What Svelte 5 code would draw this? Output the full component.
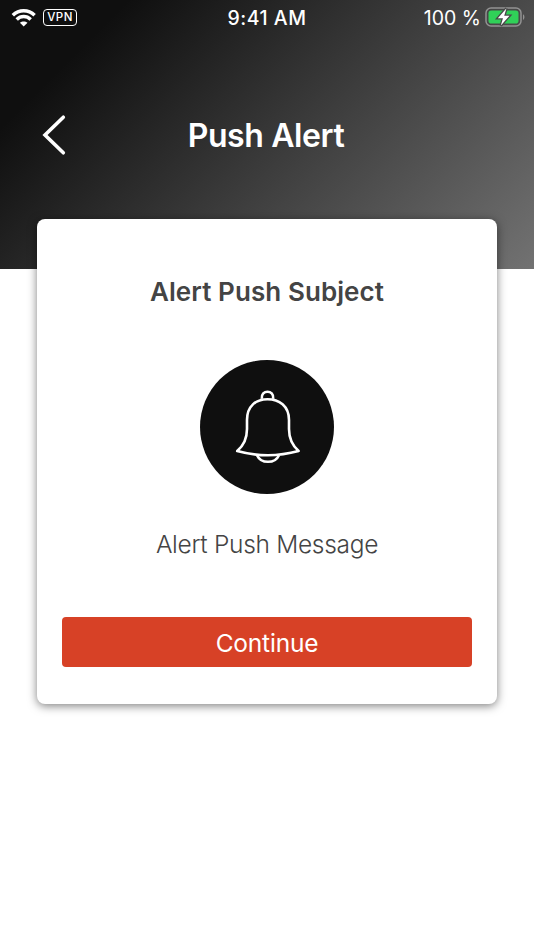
<script>
  const time = '9:41 AM';
  const battery = '100 %';
</script>

<main class="screen">
  <header class="hero">
    <div class="status">
      <div class="side left">
        <svg class="wifi" width="26" height="20" viewBox="0 0 26 20" fill="none" stroke="#fff" stroke-width="3.5">
          <path d="M1.8 7.2C8 1.2 17.4 1.2 23.6 7.2" />
          <path d="M5.7 11.5C9.8 7.6 15.6 7.6 19.7 11.5" />
          <path d="M12.7 18.6L8.9 14.8C11.1 12.9 14.3 12.9 16.5 14.8Z" fill="#fff" stroke="none" />
        </svg>
        <span class="vpn">VPN</span>
      </div>
      <div class="time">{time}</div>
      <div class="side right">
        <span class="percent">{battery}</span>
        <svg class="battery" width="40" height="22" viewBox="0 0 40 22">
          <rect x="1" y="2" width="35" height="18" rx="5" fill="none" stroke="#929292" stroke-width="1.5" />
          <rect x="3.5" y="4.4" width="30" height="13.2" rx="2.8" fill="#30d158" />
          <path d="M38 8.2C39.9 9 39.9 13 38 13.8Z" fill="#929292" />
          <path d="M21.5 2.3L12.8 12.2H18L15.8 19.6L24.5 9.7H19.2Z" fill="#fff" stroke="#484848" stroke-width="2.6" paint-order="stroke" />
        </svg>
      </div>
    </div>
    <div class="nav">
      <button class="back" aria-label="Back">
        <svg width="26" height="42" viewBox="0 0 26 42" fill="none" stroke="#fff" stroke-width="3.6" stroke-linecap="round" stroke-linejoin="miter">
          <path d="M23.3 3.2L5 21L23.3 38.8" />
        </svg>
      </button>
      <h1>Push Alert</h1>
    </div>
  </header>

  <section class="card">
    <h2>Alert Push Subject</h2>
    <div class="disc">
      <svg width="134" height="134" viewBox="0 0 134 134" fill="none" stroke="#fff" stroke-width="2.6" stroke-linejoin="round">
        <path d="M61.8 38.8C60.7 29.3 74.3 29.3 73.2 38.8" />
        <path d="M47 60C47 46 56 39.2 67.5 39.2S89 46 89 60V69C89 78.5 93.5 86.5 98.6 91C78 96.6 57.5 96.6 37.2 91C42.5 86.5 47 78.5 47 69Z" />
        <path d="M57 95.2C61 104 75 104 79 95.2" />
      </svg>
    </div>
    <p>Alert Push Message</p>
    <button class="continue">Continue</button>
  </section>
</main>

<style>
  .screen {
    width: 534px;
    height: 950px;
    overflow: hidden;
    background: #fff;
    font-family: Inter, "Liberation Sans", sans-serif;
  }
  .hero {
    height: 269px;
    background: linear-gradient(135deg, #0f0f0f 16%, #727272 100%);
    color: #fff;
  }
  .status {
    height: 34px;
    display: grid;
    grid-template-columns: 1fr auto 1fr;
    align-items: center;
  }
  .side {
    display: flex;
    align-items: center;
  }
  .left { padding-left: 11px; }
  .right { justify-content: flex-end; padding-right: 9px; }
  .wifi { margin-top: 1px; }
  .vpn {
    box-sizing: border-box;
    width: 34px;
    height: 17px;
    margin-left: 6px;
    border: 1.5px solid #fff;
    border-radius: 4px;
    font-size: 11.5px;
    font-weight: 500;
    line-height: 15px;
    text-align: center;
    letter-spacing: 0.5px;
  }
  .time { font-size: 19.5px; font-weight: 550; letter-spacing: 0.5px; padding-top: 1px; }
  .percent { font-size: 19.5px; padding-top: 1px; margin-right: 4px; white-space: nowrap; }
  .battery { margin-top: -1px; }
  .nav {
    height: 202px;
    display: grid;
    grid-template-columns: 80px 1fr 80px;
    align-items: center;
  }
  button { border: 0; padding: 0; font-family: inherit; }
  .back { height: 42px; background: none; padding-left: 40px; text-align: left; }
  .back svg { display: block; }
  h1 { margin: 0; padding: 2px 2px 0 0; font-size: 32px; line-height: 40px; font-weight: 600; letter-spacing: -0.4px; text-align: center; }
  .card {
    position: relative;
    box-sizing: border-box;
    width: 460px;
    height: 485px;
    margin: -50px auto 0;
    padding: 53px 25px 37px;
    display: flex;
    flex-direction: column;
    align-items: center;
    background: #fff;
    border-radius: 8px;
    box-shadow: 0 2px 10px rgba(0, 0, 0, 0.5);
  }
  h2 { margin: 0; font-size: 26px; line-height: 40px; font-weight: 600; letter-spacing: 0.08px; color: #444; }
  .disc { width: 134px; height: 134px; margin-top: 48px; border-radius: 50%; background: #0f0f0f; }
  .disc svg { display: block; }
  p { margin: 30px 0 0; font-size: 24.5px; line-height: 40px; font-weight: 350; letter-spacing: -0.3px; color: #444; }
  .continue {
    width: 410px;
    height: 50px;
    margin-top: auto;
    padding-top: 1px;
    border-radius: 4px;
    background: #d74126;
    color: #fff;
    font-size: 24.5px;
    letter-spacing: -0.2px;
  }
</style>
